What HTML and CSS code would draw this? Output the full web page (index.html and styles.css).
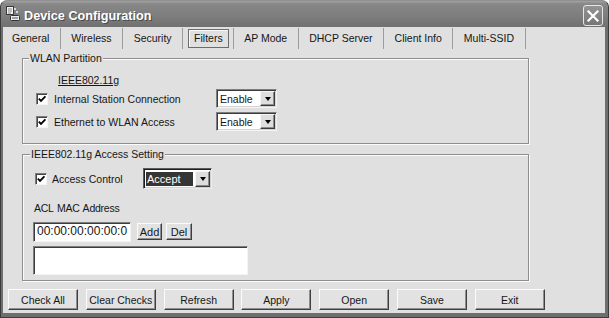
FILE: index.html
```html
<!DOCTYPE html>
<html>
	<head>
		<meta charset="utf-8">
		<title>Device Configuration</title>
		<link rel="stylesheet" href="styles.css">
	</head>
	<body>
		<div class="window">
			<div class="titlebar">
				<svg class="appicon" width="16" height="16" viewBox="0 0 16 16">
					<rect x="1.5" y="1.5" width="7" height="8" fill="#f2f2f2" stroke="#3a3a3a"/>
					<path d="M3 4h4M3 6h4M3 8h3" stroke="#8a8a8a"/>
					<rect x="9" y="3" width="2" height="2" fill="#d8d8d8"/>
					<rect x="11" y="6" width="2" height="2" fill="#d8d8d8"/>
					<rect x="5.5" y="10.5" width="9" height="5" rx="1" fill="#ececec" stroke="#333"/>
					<path d="M7 13h6" stroke="#555"/>
				</svg>
				<span class="title">Device Configuration</span>
				<span class="close">
					<svg width="12" height="12" viewBox="0 0 12 12"><path d="M1.5 1.5l9 9M10.5 1.5l-9 9" stroke="#fff" stroke-width="2.2" stroke-linecap="square"/></svg>
				</span>
			</div>
			<div class="body">
				<ul class="tabs">
					<li>General</li>
					<li>Wireless</li>
					<li>Security</li>
					<li class="active"><span>Filters</span></li>
					<li>AP Mode</li>
					<li>DHCP Server</li>
					<li>Client Info</li>
					<li>Multi-SSID</li>
				</ul>
				<div class="panel">
					<div class="group wlan">
						<span class="legend">WLAN Partition</span>
						<div class="band">IEEE802.11g</div>
						<div class="row">
							<span class="check"><svg width="8" height="8" viewBox="0 0 8 8"><path d="M0.8 3.6l2.2 2.3 4.4-4.6" fill="none" stroke="#000" stroke-width="1.8"/></svg></span>
							<span class="label">Internal Station Connection</span>
							<span class="combo"><span class="value">Enable</span><span class="drop"><i></i></span></span>
						</div>
						<div class="row">
							<span class="check"><svg width="8" height="8" viewBox="0 0 8 8"><path d="M0.8 3.6l2.2 2.3 4.4-4.6" fill="none" stroke="#000" stroke-width="1.8"/></svg></span>
							<span class="label">Ethernet to WLAN Access</span>
							<span class="combo"><span class="value">Enable</span><span class="drop"><i></i></span></span>
						</div>
					</div>
					<div class="group acl">
						<span class="legend">IEEE802.11g Access Setting</span>
						<div class="row">
							<span class="check"><svg width="8" height="8" viewBox="0 0 8 8"><path d="M0.8 3.6l2.2 2.3 4.4-4.6" fill="none" stroke="#000" stroke-width="1.8"/></svg></span>
							<span class="label">Access Control</span>
							<span class="combo focus"><span class="value">Accept</span><span class="drop"><i></i></span></span>
						</div>
						<div class="caption">ACL MAC Address</div>
						<div class="macrow">
							<span class="field">00:00:00:00:00:0</span>
							<button class="small">Add</button>
							<button class="small">Del</button>
						</div>
						<div class="listbox"></div>
					</div>
				</div>
				<div class="buttons">
					<button>Check All</button>
					<button>Clear Checks</button>
					<button>Refresh</button>
					<button>Apply</button>
					<button>Open</button>
					<button>Save</button>
					<button>Exit</button>
				</div>
			</div>
		</div>
	</body>
</html>
```

FILE: styles.css
```css
*{
	margin:0;
	padding:0;
	box-sizing:border-box;
	list-style:none;
}
body{
	width:609px;
	height:318px;
	overflow:hidden;
	font-family:"Liberation Sans", Arial, sans-serif;
	font-size:10.5px;
	color:#161616;
	background:#fff;
}
.window{
	width:609px;
	height:318px;
	display:flex;
	flex-direction:column;
	background:#6e6e6e;
	border:1px solid #3c3c3c;
	border-top-color:#909090;
	border-radius:7px 7px 0 0;
}
.titlebar{
	height:26px;
	display:flex;
	align-items:flex-start;
	padding-left:4px;
	border-radius:6px 6px 0 0;
	background:linear-gradient(#a2a2a2 0, #878787 3px, #7d7d7d 60%, #707070 100%);
}
.appicon{
	margin-top:4px;
}
.title{
	margin:7px 0 0 3px;
	line-height:16px;
	font-size:12.7px;
	font-weight:bold;
	color:#fff;
	text-shadow:1px 1px 0 #4a4a4a;
}
.close{
	margin:4px 5px 0 auto;
	width:20px;
	height:21px;
	display:flex;
	align-items:center;
	justify-content:center;
	border:1px solid #e6e6e6;
	border-radius:3px;
	background:linear-gradient(#949494, #767676);
}
.body{
	flex:1;
	margin:0 3px 4px 2px;
	background:#e0e0e0;
	display:flex;
	flex-direction:column;
}

/* tabs */
.tabs{
	display:flex;
	height:23px;
	padding-left:1px;
}
.tabs li{
	margin-top:1px;
	height:21px;
	line-height:21px;
	padding:0 10.5px;
	border-right:1px solid #9c9c9c;
	white-space:nowrap;
}
.tabs li:first-child{
	padding-left:8px;
}
.tabs li.active{
	padding:0 4px 0 5px;
}
.tabs li.active span{
	display:inline-block;
	margin-top:1px;
	height:19px;
	line-height:17px;
	padding:0 5px;
	border:1px solid #6c6c6c;
	box-shadow:inset 1px 1px 0 #fafafa;
	vertical-align:top;
}

/* group boxes */
.panel{
	padding:8px 0 0 19px;
}
.group{
	position:relative;
	width:507px;
	border:1px solid #8e8e8e;
	box-shadow:inset 1px 1px 0 #fbfbfb, 1px 1px 0 #fbfbfb;
}
.legend{
	position:absolute;
	top:-8px;
	line-height:14px;
	padding:0 1px;
	background:#e0e0e0;
}
.wlan{
	height:86px;
	padding:14px 0 0 13px;
}
.wlan .legend{
	left:6px;
}
.acl{
	margin-top:10px;
	height:127px;
	padding:13px 0 0 10px;
}
.acl .legend{
	left:7px;
}
.band{
	margin-left:22px;
	line-height:14px;
	text-decoration:underline;
}
.row{
	display:flex;
	align-items:center;
}
.wlan .row{
	height:19px;
	margin-top:2px;
}
.wlan .row + .row{
	margin-top:4px;
}
.acl .row{
	height:21px;
}
.check{
	width:12px;
	height:12px;
	display:flex;
	align-items:center;
	justify-content:center;
	background:#fff;
	border:1px solid;
	border-color:#7e7e7e #f4f4f4 #f4f4f4 #7e7e7e;
	box-shadow:inset 1px 1px 0 #444;
}
.wlan .label{
	width:162px;
	margin-left:6px;
}
.acl .check{
	margin-left:2px;
}
.acl .label{
	width:91px;
	margin-left:5px;
}

/* drop down */
.combo{
	display:flex;
	align-items:center;
	width:61px;
	height:19px;
	padding:0 1px 0 3px;
	background:#fff;
	border:1px solid;
	border-color:#7e7e7e #f4f4f4 #f4f4f4 #7e7e7e;
	box-shadow:inset 1px 1px 0 #3c3c3c, inset -1px -1px 0 #d4d4d4;
}
.combo .value{
	flex:1;
}
.drop{
	width:15px;
	height:15px;
	display:flex;
	align-items:center;
	justify-content:center;
	background:#dedede;
	border:1px solid;
	border-color:#f6f6f6 #3c3c3c #3c3c3c #f6f6f6;
	box-shadow:inset -1px -1px 0 #8c8c8c;
}
.drop i{
	width:0;
	height:0;
	border-left:3.5px solid transparent;
	border-right:3.5px solid transparent;
	border-top:4px solid #000;
}
.combo.focus{
	width:69px;
	height:21px;
	padding:0 1px 0 2px;
	font-size:11px;
	border-color:#5a5a5a #ececec #ececec #5a5a5a;
	box-shadow:inset 1px 1px 0 #1e1e1e, inset -1px -1px 0 #cfcfcf;
}
.combo.focus .value{
	flex:0 0 47px;
	height:14px;
	line-height:14px;
	margin-right:2px;
	padding-left:1px;
	background:#353535;
	color:#fff;
}
.combo.focus .drop{
	height:16px;
}

/* acl list */
.caption{
	margin:12px 0 0 1px;
	line-height:14px;
	letter-spacing:-0.25px;
	word-spacing:1px;
}
.macrow{
	display:flex;
	align-items:flex-start;
	margin-top:7px;
	height:20px;
}
.field{
	width:98px;
	height:20px;
	line-height:17px;
	padding-left:3px;
	overflow:hidden;
	white-space:nowrap;
	font-size:12px;
	background:#fff;
	border:1px solid;
	border-color:#7e7e7e #f4f4f4 #f4f4f4 #7e7e7e;
	box-shadow:inset 1px 1px 0 #3c3c3c;
}
.listbox{
	margin-top:4px;
	width:215px;
	height:29px;
	background:#fff;
	border:1px solid;
	border-color:#7e7e7e #f4f4f4 #f4f4f4 #7e7e7e;
	box-shadow:inset 1px 1px 0 #3c3c3c;
}

/* buttons */
button{
	font-family:inherit;
	font-size:10.5px;
	color:#161616;
	background:#e2e2e2;
	border:1px solid;
	border-color:#fbfbfb #3e3e3e #3e3e3e #fbfbfb;
	box-shadow:inset -1px -1px 0 #8e8e8e;
}
button.small{
	width:25px;
	height:17px;
	margin:1px 0 0 6px;
	font-size:11px;
}
button.small + button.small{
	width:26px;
	margin-left:4px;
}
.buttons{
	display:flex;
	gap:7.8px;
	margin-top:8px;
	padding-left:5px;
}
.buttons button{
	width:70px;
	height:21px;
}
```
